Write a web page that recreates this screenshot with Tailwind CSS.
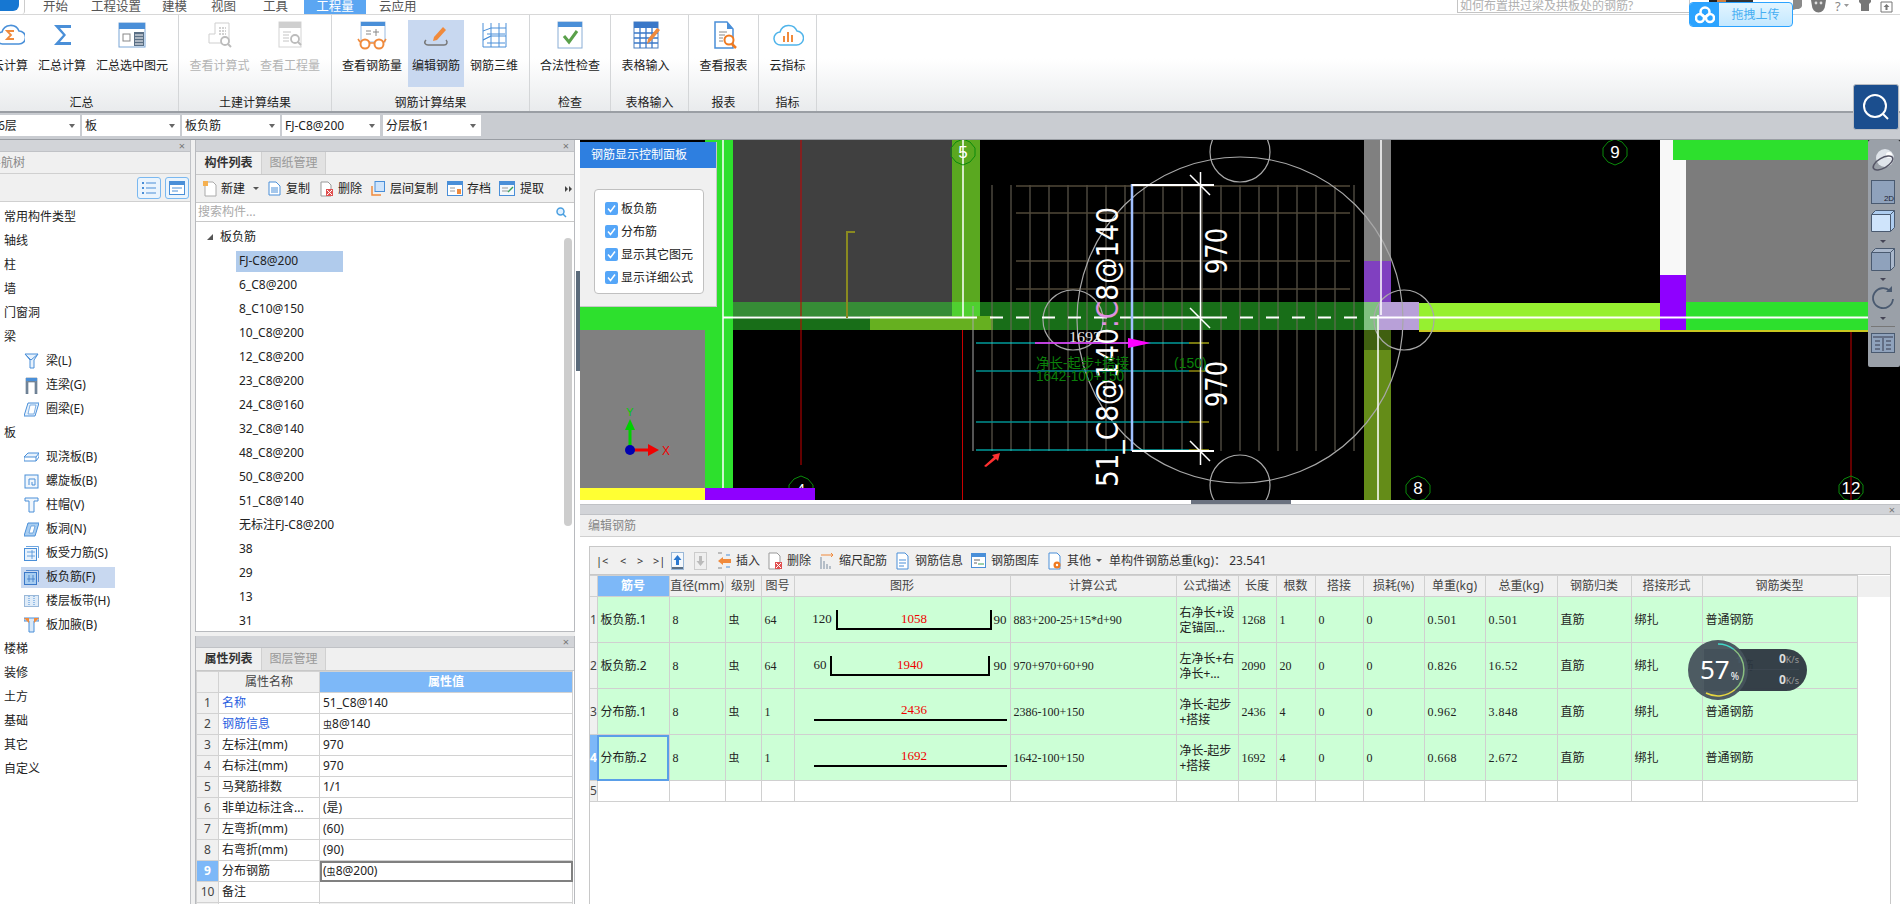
<!DOCTYPE html>
<html lang="zh">
<head>
<meta charset="utf-8">
<title>钢筋</title>
<script src="https://cdn.jsdelivr.net/npm/@tailwindcss/browser@4"></script>
</head>
<body class="m-0 bg-white">
<div class="relative flex h-[904px] w-[1900px] flex-col overflow-hidden bg-white text-[12px] leading-[16px] text-[#222] [font-family:'Noto_Sans','Noto_Sans_CJK_SC',sans-serif]">

  <!-- top tabs -->
  <div class="relative flex h-[15px] shrink-0 items-start border-b border-[#d8d8d8] bg-white">
    <div class="h-[14px] w-[25px] shrink-0 rounded-br-[3px] border-r border-[#ccc] bg-white"><div class="h-[11px] w-[19px] rounded-br-[6px] bg-[#1677d2]"></div></div>
    <div class="flex h-[14px] items-center text-[12.5px] leading-[12px] text-[#555]">
      <span class="w-[58px] pl-[18px]">开始</span>
      <span class="w-[66px] pl-[8px]">工程设置</span>
      <span class="w-[52px] pl-[13px]">建模</span>
      <span class="w-[50px] pl-[10px]">视图</span>
      <span class="w-[53px] pl-[12px]">工具</span>
      <span class="flex h-[14px] w-[62px] items-center justify-center bg-[#5ba6f2] text-white">工程量</span>
      <span class="pl-[13px]">云应用</span>
    </div>
    <div class="absolute left-[1457px] top-0 h-[13px] w-[233px] overflow-hidden border-x border-b border-[#c4c4c4] bg-white pl-[2px] text-[12px] leading-[11px] text-[#b0b0b0]">如何布置拱过梁及拱板处的钢筋?</div>
    <div class="absolute left-[1709px] top-0 flex h-[2px] w-[44px]"><div class="w-[8px] bg-[#222]"></div><div class="w-[9px] bg-[#d08040]"></div><div class="w-[27px] bg-[#333]"></div></div>
    <svg class="absolute left-[1790px] top-0" width="110" height="14" viewBox="0 0 110 14">
      <path d="M3 0h9v6a5 4 0 0 1-6 3l-3 1z" fill="#8a8a8a"/>
      <path d="M21 0h15l-1 6a6 6 0 0 1-13 0z" fill="#777"/><circle cx="26" cy="3" r="1.400" fill="#ddd"/><circle cx="31" cy="3" r="1.400" fill="#ddd"/>
      <text x="45" y="11" font-size="13" fill="#888">?</text><path d="M54 4h5l-2.500 3z" fill="#999"/>
      <path d="M69 0h12v2l-2 2v7h-8V4l-2-2z" fill="#777"/>
      <path d="M91 2h11v10H91z" fill="none" stroke="#777"/><path d="M96.500 4l3 3h-2v3h-2V7h-2z" fill="#777"/>
    </svg>
  </div>

  <!-- upload widget -->
  <div class="absolute left-[1689px] top-[2px] z-30 flex h-[25px] w-[104px] overflow-hidden rounded-[4px] border border-[#2ba3ff] bg-gradient-to-b from-[#e2f5ff] to-[#c4e8ff]">
    <div class="flex w-[29px] items-center justify-center bg-[#2ba3ff]">
      <svg width="20" height="18" viewBox="0 0 20 18"><circle cx="10" cy="6" r="4.500" fill="none" stroke="#fff" stroke-width="2.500"/><circle cx="5" cy="12" r="4" fill="none" stroke="#fff" stroke-width="2.500"/><circle cx="15" cy="12" r="4" fill="none" stroke="#fff" stroke-width="2.500"/></svg>
    </div>
    <div class="flex flex-1 items-center justify-center text-[12px] text-[#46aef2]">拖拽上传</div>
  </div>

  <!-- ribbon -->
  <div class="flex h-[98px] shrink-0 overflow-hidden border-b-2 border-[#9a9ea4] bg-gradient-to-b from-white from-[45%] to-[#e9ebed]">
    <!-- group 1 -->
    <div class="ml-[-15px] flex w-[194px] shrink-0 flex-col border-r border-[#d4d6d8]">
      <div class="flex h-[80px] items-start pt-[5px]">
        <div class="flex w-[50px] flex-col items-center">
          <svg width="30" height="30" viewBox="0 0 30 30"><path d="M8 24a6 6 0 0 1-1-12 9 9 0 0 1 17-1 6.500 6.500 0 0 1 0 13z" fill="#fff" stroke="#4a90d9" stroke-width="1.600"/><path d="M19 11h-7l4 4-4 4h7" fill="none" stroke="#f08a3c" stroke-width="1.800"/></svg>
          <span class="mt-[8px] whitespace-nowrap">云计算</span>
        </div>
        <div class="flex w-[54px] flex-col items-center">
          <svg width="30" height="30" viewBox="0 0 30 30"><path d="M24 5H7l9 10-9 10h17v-3H13l6-7-6-7h11z" fill="#4a8fd8"/></svg>
          <span class="mt-[8px] whitespace-nowrap">汇总计算</span>
        </div>
        <div class="flex w-[86px] flex-col items-center">
          <svg width="30" height="30" viewBox="0 0 30 30"><rect x="2" y="3" width="26" height="24" fill="#fff" stroke="#7ba6d6"/><rect x="2" y="3" width="26" height="6" fill="#4a8fd8"/><rect x="6" y="14" width="7" height="7" fill="none" stroke="#888"/><rect x="17" y="12" width="10" height="14" fill="#5a6f85"/><path d="M18 15h8M18 18h8M18 21h8M18 24h8" stroke="#fff"/></svg>
          <span class="mt-[8px] whitespace-nowrap">汇总选中图元</span>
        </div>
      </div>
      <div class="mt-[1px] text-center">汇总</div>
    </div>
    <!-- group 2 -->
    <div class="flex w-[153px] shrink-0 flex-col border-r border-[#d4d6d8]">
      <div class="flex h-[80px] items-start pl-[5px] pt-[5px] text-[#b4b4b4]">
        <div class="flex w-[71px] flex-col items-center">
          <svg width="30" height="30" viewBox="0 0 30 30"><path d="M10 3h14v20H4V14h6z" fill="#fff" stroke="#cfcfcf"/><path d="M14 8h7M14 11h7M14 14h7" stroke="#c4c4c4" stroke-width="1.500" stroke-dasharray="2 1"/><circle cx="20" cy="21" r="4" fill="#fff" stroke="#bcbcbc" stroke-width="1.800"/><path d="M23 24l3 3" stroke="#bcbcbc" stroke-width="2"/></svg>
          <span class="mt-[8px] whitespace-nowrap">查看计算式</span>
        </div>
        <div class="flex w-[70px] flex-col items-center">
          <svg width="30" height="30" viewBox="0 0 30 30"><rect x="4" y="2" width="22" height="25" fill="#fff" stroke="#d4d4d4"/><rect x="4" y="2" width="22" height="6" fill="#cfcfcf"/><path d="M8 12h8M8 15h6M8 18h6M8 21h6" stroke="#c4c4c4"/><circle cx="20" cy="19" r="4" fill="#fff" stroke="#bcbcbc" stroke-width="1.800"/><path d="M23 22l3 3" stroke="#bcbcbc" stroke-width="2"/></svg>
          <span class="mt-[8px] whitespace-nowrap">查看工程量</span>
        </div>
      </div>
      <div class="mt-[1px] text-center">土建计算结果</div>
    </div>
    <!-- group 3 -->
    <div class="flex w-[198px] shrink-0 flex-col border-r border-[#d4d6d8]">
      <div class="flex h-[80px] items-start pl-[4px]">
        <div class="flex w-[72px] flex-col items-center pt-[5px]">
          <svg width="32" height="30" viewBox="0 0 32 30"><rect x="5" y="2" width="24" height="20" fill="#fff" stroke="#9bbbe0"/><rect x="5" y="2" width="24" height="4" fill="#4a8fd8"/><path d="M10 11h5M10 14h5M20 9v7M17 12h6" stroke="#888"/><circle cx="9" cy="24" r="4.500" fill="#fff" stroke="#f08a3c" stroke-width="2"/><circle cx="23" cy="24" r="4.500" fill="#fff" stroke="#f08a3c" stroke-width="2"/><path d="M13 23h6M4 22l-2-3M28 22l2-3" stroke="#f08a3c" stroke-width="1.600"/></svg>
          <span class="mt-[8px] whitespace-nowrap">查看钢筋量</span>
        </div>
        <div class="mt-[5px] flex h-[67px] w-[56px] flex-col items-center bg-[#c8d8f0]">
          <svg width="30" height="30" viewBox="0 0 30 30"><path d="M5 20c-3 3 0 5 2 5h16c3 0 4-3 2-5" fill="none" stroke="#777" stroke-width="1.500"/><path d="M12 21l1-4 9-10 3 3-9 10z" fill="#f08a3c"/></svg>
          <span class="mt-[8px] whitespace-nowrap">编辑钢筋</span>
        </div>
        <div class="flex w-[60px] flex-col items-center pt-[5px]">
          <svg width="30" height="30" viewBox="0 0 30 30"><path d="M4 3v24M12 3v24M20 3v24M27 3v24M4 11L12 8h15M4 20l8-4h15M12 16l-8 4M4 27h23M8 14h18M8 23h18" fill="none" stroke="#4a8fd8"/></svg>
          <span class="mt-[8px] whitespace-nowrap">钢筋三维</span>
        </div>
      </div>
      <div class="mt-[1px] text-center">钢筋计算结果</div>
    </div>
    <!-- group 4 -->
    <div class="flex w-[81px] shrink-0 flex-col border-r border-[#d4d6d8]">
      <div class="flex h-[80px] flex-col items-center pt-[5px]">
        <svg width="30" height="30" viewBox="0 0 30 30"><rect x="3" y="2" width="24" height="26" fill="#fff" stroke="#8aaed6"/><rect x="3" y="2" width="24" height="5" fill="#4a8fd8"/><path d="M9 16l5 6 8-11" fill="none" stroke="#5aa04a" stroke-width="3"/></svg>
        <span class="mt-[8px] whitespace-nowrap">合法性检查</span>
      </div>
      <div class="mt-[1px] text-center">检查</div>
    </div>
    <!-- group 5 -->
    <div class="flex w-[78px] shrink-0 flex-col border-r border-[#d4d6d8]">
      <div class="flex h-[80px] flex-col items-center pr-[8px] pt-[5px]">
        <svg width="30" height="30" viewBox="0 0 30 30"><rect x="3" y="2" width="24" height="26" fill="#fff" stroke="#4a7fc0"/><rect x="3" y="2" width="24" height="6" fill="#3a78c8"/><path d="M3 13h24M3 18h24M3 23h24M9 8v20M15 8v20M21 8v20" stroke="#3a78c8" stroke-width="1.300"/><path d="M16 24l1-5 9-11 3 2-9 11z" fill="#f08a3c"/></svg>
        <span class="mt-[8px] whitespace-nowrap">表格输入</span>
      </div>
      <div class="mt-[1px] text-center">表格输入</div>
    </div>
    <!-- group 6 -->
    <div class="flex w-[70px] shrink-0 flex-col border-r border-[#d4d6d8]">
      <div class="flex h-[80px] flex-col items-center pt-[5px]">
        <svg width="30" height="30" viewBox="0 0 30 30"><path d="M6 2h12l6 7v19H6z" fill="#fff" stroke="#4a8fd8" stroke-width="1.500"/><path d="M18 2v7h6z" fill="#4a8fd8"/><path d="M10 12h8M10 15h6M10 18h4M10 21h4" stroke="#888"/><circle cx="20" cy="20" r="4.500" fill="#fff" stroke="#f07a20" stroke-width="2"/><path d="M23 24l4 4" stroke="#f07a20" stroke-width="2.500"/></svg>
        <span class="mt-[8px] whitespace-nowrap">查看报表</span>
      </div>
      <div class="mt-[1px] text-center">报表</div>
    </div>
    <!-- group 7 -->
    <div class="flex w-[58px] shrink-0 flex-col border-r border-[#d4d6d8]">
      <div class="flex h-[80px] flex-col items-center pt-[5px]">
        <svg width="32" height="30" viewBox="0 0 32 30"><path d="M9 25a6.500 6.500 0 0 1-1-13 9 9 0 0 1 17-1 7 7 0 0 1-1 14z" fill="#fff" stroke="#4fb4ea" stroke-width="1.500"/><path d="M12 16v6M16 12v10M20 15v7" stroke="#f08a3c" stroke-width="2"/></svg>
        <span class="mt-[8px] whitespace-nowrap">云指标</span>
      </div>
      <div class="mt-[1px] text-center">指标</div>
    </div>
  </div>

  <!-- search button -->
  <div class="absolute left-[1853px] top-[84px] z-30 flex h-[46px] w-[46px] items-center justify-center rounded-[3px] border border-[#b8bcc2] bg-[#1b4e8e]">
    <svg width="34" height="34" viewBox="0 0 34 34"><circle cx="16" cy="16" r="11" fill="none" stroke="#fff" stroke-width="2"/><path d="M24 24l5 5" stroke="#fff" stroke-width="2"/></svg>
  </div>

  <!-- selector row -->
  <div class="flex h-[27px] shrink-0 items-center border-b border-[#9a9ea4] bg-[#c9ccd1] pb-[1px]">
    <div class="ml-[-4px] flex h-[21px] w-[84px] items-center justify-between bg-white pl-[2px] pr-[5px]"><span>6层</span><span class="h-0 w-0 border-x-[3px] border-t-[4px] border-x-transparent border-t-[#666]"></span></div>
    <div class="ml-[2px] flex h-[21px] w-[98px] items-center justify-between bg-white pl-[3px] pr-[5px]"><span>板</span><span class="h-0 w-0 border-x-[3px] border-t-[4px] border-x-transparent border-t-[#666]"></span></div>
    <div class="ml-[2px] flex h-[21px] w-[98px] items-center justify-between bg-white pl-[3px] pr-[5px]"><span>板负筋</span><span class="h-0 w-0 border-x-[3px] border-t-[4px] border-x-transparent border-t-[#666]"></span></div>
    <div class="ml-[2px] flex h-[21px] w-[98px] items-center justify-between bg-white pl-[3px] pr-[5px]"><span>FJ-C8@200</span><span class="h-0 w-0 border-x-[3px] border-t-[4px] border-x-transparent border-t-[#666]"></span></div>
    <div class="ml-[3px] flex h-[21px] w-[98px] items-center justify-between bg-white pl-[3px] pr-[5px]"><span>分层板1</span><span class="h-0 w-0 border-x-[3px] border-t-[4px] border-x-transparent border-t-[#666]"></span></div>
  </div>

  <!-- main -->
  <div class="flex min-h-0 flex-1 bg-[#f0f0f0]">

    <!-- left tree -->
    <div class="flex w-[191px] shrink-0 flex-col border-r border-[#c0c2c6] bg-white">
      <div class="flex h-[12px] shrink-0 items-center justify-end border-b border-[#c0c2c6] bg-[#d2d4d8] pr-[5px] text-[11px] leading-[10px] text-[#777]">×</div>
      <div class="flex h-[22px] shrink-0 items-center overflow-hidden border-b border-[#d0d0d0] bg-[#f0f0f0] text-[#888]"><span class="ml-[-11px]">导航树</span></div>
      <div class="flex h-[28px] shrink-0 items-center justify-end gap-[4px] border-b border-[#d0d0d0] bg-[#f0f0f0] pr-[1px]">
        <div class="flex h-[22px] w-[24px] items-center justify-center rounded-[3px] border border-[#7ab8f0] bg-[#eaf4fd]"><svg width="14" height="14" viewBox="0 0 14 14"><path d="M4 2h10M4 7h10M4 12h10" stroke="#4a8fd8"/><path d="M0 1h2v2H0zM0 6h2v2H0zM0 11h2v2H0z" fill="#4a8fd8"/></svg></div>
        <div class="flex h-[22px] w-[24px] items-center justify-center rounded-[3px] border border-[#7ab8f0] bg-[#eaf4fd]"><svg width="16" height="14" viewBox="0 0 16 14"><rect x=".5" y=".5" width="15" height="13" fill="#fff" stroke="#4a8fd8"/><rect x="1" y="1" width="14" height="3" fill="#4a8fd8"/><path d="M3 7h10M3 10h6" stroke="#4a8fd8"/></svg></div>
      </div>
      <div class="pt-[3px]">
        <div class="flex h-6 items-center pl-[4px]">常用构件类型</div>
        <div class="flex h-6 items-center pl-[4px]">轴线</div>
        <div class="flex h-6 items-center pl-[4px]">柱</div>
        <div class="flex h-6 items-center pl-[4px]">墙</div>
        <div class="flex h-6 items-center pl-[4px]">门窗洞</div>
        <div class="flex h-6 items-center pl-[4px]">梁</div>
        <div class="flex h-6 items-center pl-[24px]"><svg width="15" height="16" viewBox="0 0 15 16"><path d="M1 1h13l-4 6v8H6V7z" fill="#e8f2fc" stroke="#4a8fd8"/><path d="M1 1l6 6 7-6" fill="none" stroke="#4a8fd8"/></svg><span class="ml-[7px]">梁(L)</span></div>
        <div class="flex h-6 items-center pl-[24px]"><svg width="15" height="17" viewBox="0 0 15 17"><path d="M2 1h11v16h-2V5H4v12H2z" fill="#7a8ca0" stroke="#5a6f85" stroke-width=".6"/><rect x="2" y="1" width="11" height="3" fill="#4a8fd8"/></svg><span class="ml-[7px]">连梁(G)</span></div>
        <div class="flex h-6 items-center pl-[24px]"><svg width="15" height="15" viewBox="0 0 15 15"><path d="M4 1h11l-4 13H0z" fill="#e8f2fc" stroke="#4a8fd8"/><path d="M6 3h6l-2 9H4z" fill="#fff" stroke="#4a8fd8" stroke-width=".7"/></svg><span class="ml-[7px]">圈梁(E)</span></div>
        <div class="flex h-6 items-center pl-[4px]">板</div>
        <div class="flex h-6 items-center pl-[24px]"><svg width="15" height="12" viewBox="0 0 15 12"><path d="M4 2h11l-3 4H0z" fill="#e8f2fc" stroke="#4a8fd8"/><path d="M0 6v4h12l3-4V2M12 6v4" fill="none" stroke="#4a8fd8"/></svg><span class="ml-[7px]">现浇板(B)</span></div>
        <div class="flex h-6 items-center pl-[24px]"><svg width="15" height="15" viewBox="0 0 15 15"><rect x="1" y="1" width="13" height="13" fill="#f0f6fc" stroke="#4a8fd8"/><path d="M5 11V5h6v6H8V8" fill="none" stroke="#4a8fd8"/></svg><span class="ml-[7px]">螺旋板(B)</span></div>
        <div class="flex h-6 items-center pl-[24px]"><svg width="15" height="16" viewBox="0 0 15 16"><path d="M1 1h13v3h-4v11H5V4H1z" fill="#f0f6fc" stroke="#4a8fd8"/></svg><span class="ml-[7px]">柱帽(V)</span></div>
        <div class="flex h-6 items-center pl-[24px]"><svg width="15" height="15" viewBox="0 0 15 15"><path d="M4 1h11l-4 13H0z" fill="#a8cdf0" stroke="#4a8fd8"/><path d="M7 4h4l-2 7H5z" fill="#fff" stroke="#4a8fd8" stroke-width=".7"/></svg><span class="ml-[7px]">板洞(N)</span></div>
        <div class="flex h-6 items-center pl-[24px]"><svg width="15" height="15" viewBox="0 0 15 15"><rect x=".5" y="2.500" width="12" height="12" fill="#e8f2fc" stroke="#4a8fd8"/><path d="M2 .5h12.500V12M3 6h8M3 10h8M8 4v9" fill="none" stroke="#4a8fd8" stroke-width=".8"/></svg><span class="ml-[7px]">板受力筋(S)</span></div>
        <div class="flex h-6 items-center"><div class="ml-[21px] flex h-[21px] w-[94px] items-center bg-[#c8d8f0] pl-[3px]"><svg width="15" height="15" viewBox="0 0 15 15"><rect x=".5" y="2.500" width="12" height="12" fill="#a8cdf0" stroke="#3a78c8"/><path d="M2 .5h12.500V12M5 5v7M9 5v7M3 9h8" fill="none" stroke="#3a78c8" stroke-width=".8"/></svg><span class="ml-[7px]">板负筋(F)</span></div></div>
        <div class="flex h-6 items-center pl-[24px]"><svg width="15" height="12" viewBox="0 0 15 12"><rect x=".5" y=".5" width="14" height="11" fill="#e0ecf8" stroke="#9ab8d8"/><path d="M5 1v10M10 1v10" stroke="#4a8fd8" stroke-dasharray="1 1"/></svg><span class="ml-[7px]">楼层板带(H)</span></div>
        <div class="flex h-6 items-center pl-[24px]"><svg width="15" height="16" viewBox="0 0 15 16"><path d="M0 1h15v3h-5v11H5V4H0z" fill="#d8e8f8" stroke="#4a8fd8"/><path d="M0 1l5 5V1zM15 1l-5 5V1z" fill="#f08a3c"/></svg><span class="ml-[7px]">板加腋(B)</span></div>
        <div class="flex h-6 items-center pl-[4px]">楼梯</div>
        <div class="flex h-6 items-center pl-[4px]">装修</div>
        <div class="flex h-6 items-center pl-[4px]">土方</div>
        <div class="flex h-6 items-center pl-[4px]">基础</div>
        <div class="flex h-6 items-center pl-[4px]">其它</div>
        <div class="flex h-6 items-center pl-[4px]">自定义</div>
      </div>
    </div>

    <!-- middle column -->
    <div class="ml-[4px] flex w-[380px] shrink-0 flex-col">
      <!-- component list -->
      <div class="flex h-[492px] shrink-0 flex-col border-x border-b border-[#b8babe] bg-white">
        <div class="flex h-[12px] shrink-0 items-center justify-end border-b border-[#c0c2c6] bg-[#d2d4d8] pr-[5px] text-[11px] leading-[10px] text-[#777]">×</div>
        <div class="flex h-[23px] shrink-0 border-b border-[#c8c8c8] bg-[#f0f0f0]">
          <div class="flex w-[65px] items-center justify-center font-bold text-[#333]">构件列表</div>
          <div class="flex w-[65px] items-center justify-center border-x border-[#d0d0d0] bg-[#e2e2e2] text-[#999]">图纸管理</div>
        </div>
        <div class="relative flex h-[28px] shrink-0 items-center border-b border-[#c8c8c8] bg-[#f0f0f0] pl-[7px]">
          <svg class="shrink-0" width="14" height="16" viewBox="0 0 14 16"><path d="M2 1h8l3 3v11H2z" fill="#fff" stroke="#aaa"/><path d="M0 0h5v5H0z" fill="#f5b050"/></svg>
          <span class="ml-[4px]">新建</span><span class="ml-[8px] h-0 w-0 border-x-[3px] border-t-[3px] border-x-transparent border-t-[#555]"></span>
          <svg class="ml-[9px] shrink-0" width="13" height="15" viewBox="0 0 13 15"><path d="M1 1h7l4 4v9H1z" fill="#fff" stroke="#4a8fd8"/><path d="M3 7h7M3 9h7M3 11h7" stroke="#4a8fd8"/></svg>
          <span class="ml-[5px]">复制</span>
          <svg class="ml-[10px] shrink-0" width="13" height="16" viewBox="0 0 13 16"><path d="M1 1h7l3 3v11H1z" fill="#fff" stroke="#999"/><rect x="6" y="8" width="7" height="7" fill="#e05050"/><path d="M7 9l5 5M12 9l-5 5" stroke="#fff"/></svg>
          <span class="ml-[5px]">删除</span>
          <svg class="ml-[9px] shrink-0" width="14" height="15" viewBox="0 0 14 15"><rect x="4" y="0.500" width="9.500" height="10" fill="#cfe4fb" stroke="#4a8fd8"/><path d="M1 5v9h9" fill="none" stroke="#f08a3c" stroke-width="1.500"/></svg>
          <span class="ml-[5px]">层间复制</span>
          <svg class="ml-[9px] shrink-0" width="16" height="15" viewBox="0 0 16 15"><rect x=".5" y=".5" width="15" height="14" fill="#fff" stroke="#4a8fd8"/><rect x="1" y="1" width="14" height="3" fill="#4a8fd8"/><path d="M3 7h5M3 10h5" stroke="#999"/><rect x="10" y="8" width="4" height="5" fill="#f08a3c"/></svg>
          <span class="ml-[4px]">存档</span>
          <svg class="ml-[8px] shrink-0" width="16" height="15" viewBox="0 0 16 15"><rect x=".5" y=".5" width="15" height="14" fill="#f4f8fc" stroke="#4a8fd8"/><rect x="1" y="1" width="14" height="3" fill="#4a8fd8"/><path d="M3 7h6M3 10h6" stroke="#999"/><path d="M9 11l5-5" stroke="#3aa05a" stroke-width="1.500"/></svg>
          <span class="ml-[5px]">提取</span>
          <span class="absolute left-[369px] top-[11px] flex gap-px"><span class="h-0 w-0 border-y-[3px] border-l-[3px] border-y-transparent border-l-[#444]"></span><span class="h-0 w-0 border-y-[3px] border-l-[3px] border-y-transparent border-l-[#444]"></span></span>
        </div>
        <div class="flex h-[19px] shrink-0 items-center justify-between border-b border-[#c8c8c8] bg-white pl-[2px] pr-[7px] text-[#aaa]">
          <span>搜索构件...</span>
          <svg width="11" height="11" viewBox="0 0 11 11"><circle cx="4.500" cy="4.500" r="3.500" fill="#e0f0ff" stroke="#4a9fe0" stroke-width="1.500"/><path d="M7 7l3 3" stroke="#4a9fe0" stroke-width="1.500"/></svg>
        </div>
        <div class="relative min-h-0 flex-1 overflow-hidden pt-[3px]">
          <div class="absolute left-[368px] top-[16px] h-[288px] w-[8px] rounded-[4px] bg-[#cdcdcd]"></div>
          <div class="flex h-6 items-center pl-[10px]"><svg width="8" height="8" viewBox="0 0 8 8"><path d="M7 1v6H1z" fill="#555"/></svg><span class="ml-[6px]">板负筋</span></div>
          <div class="flex h-6 items-center pl-[40px]"><span class="flex h-[21px] w-[107px] items-center bg-[#b0cbec] pl-[3px]">FJ-C8@200</span></div>
          <div class="flex h-6 items-center pl-[43px]">6_C8@200</div>
          <div class="flex h-6 items-center pl-[43px]">8_C10@150</div>
          <div class="flex h-6 items-center pl-[43px]">10_C8@200</div>
          <div class="flex h-6 items-center pl-[43px]">12_C8@200</div>
          <div class="flex h-6 items-center pl-[43px]">23_C8@200</div>
          <div class="flex h-6 items-center pl-[43px]">24_C8@160</div>
          <div class="flex h-6 items-center pl-[43px]">32_C8@140</div>
          <div class="flex h-6 items-center pl-[43px]">48_C8@200</div>
          <div class="flex h-6 items-center pl-[43px]">50_C8@200</div>
          <div class="flex h-6 items-center pl-[43px]">51_C8@140</div>
          <div class="flex h-6 items-center pl-[43px]">无标注FJ-C8@200</div>
          <div class="flex h-6 items-center pl-[43px]">38</div>
          <div class="flex h-6 items-center pl-[43px]">29</div>
          <div class="flex h-6 items-center pl-[43px]">13</div>
          <div class="flex h-6 items-center pl-[43px]">31</div>
        </div>
      </div>
      <!-- properties -->
      <div class="mt-[4px] flex min-h-0 flex-1 flex-col overflow-hidden border-x border-[#b8babe] bg-white">
        <div class="flex h-[12px] shrink-0 items-center justify-end border-b border-[#c0c2c6] bg-[#d2d4d8] pr-[5px] text-[11px] leading-[10px] text-[#777]">×</div>
        <div class="flex h-[23px] shrink-0 border-b border-[#c8c8c8] bg-[#f0f0f0]">
          <div class="flex w-[65px] items-center justify-center font-bold text-[#333]">属性列表</div>
          <div class="flex w-[65px] items-center justify-center border-x border-[#d0d0d0] bg-[#e2e2e2] text-[#999]">图层管理</div>
        </div>
        <table class="w-[376px] table-fixed border-collapse [&_td]:h-[21px] [&_td]:border [&_td]:border-[#d2d2d2] [&_td]:px-[3px] [&_td]:py-0 [&_th]:h-[21px] [&_th]:border [&_th]:border-[#d2d2d2] [&_th]:p-0">
          <colgroup><col class="w-[22px]"><col class="w-[101px]"><col class="w-[253px]"></colgroup>
          <tr><th class="bg-[#f0f0f0]"></th><th class="bg-[#f0f0f0] font-normal text-[#444]">属性名称</th><th class="bg-[#7db8f8] font-bold text-white">属性值</th></tr>
          <tr><td class="bg-[#f0f0f0] text-center text-[#444]">1</td><td class="text-[#2a5fe0]">名称</td><td>51_C8@140</td></tr>
          <tr><td class="bg-[#f0f0f0] text-center text-[#444]">2</td><td class="text-[#2a5fe0]">钢筋信息</td><td><span class="text-[9px]">虫</span>8@140</td></tr>
          <tr><td class="bg-[#f0f0f0] text-center text-[#444]">3</td><td>左标注(mm)</td><td>970</td></tr>
          <tr><td class="bg-[#f0f0f0] text-center text-[#444]">4</td><td>右标注(mm)</td><td>970</td></tr>
          <tr><td class="bg-[#f0f0f0] text-center text-[#444]">5</td><td>马凳筋排数</td><td>1/1</td></tr>
          <tr><td class="bg-[#f0f0f0] text-center text-[#444]">6</td><td>非单边标注含...</td><td>(是)</td></tr>
          <tr><td class="bg-[#f0f0f0] text-center text-[#444]">7</td><td>左弯折(mm)</td><td>(60)</td></tr>
          <tr><td class="bg-[#f0f0f0] text-center text-[#444]">8</td><td>右弯折(mm)</td><td>(90)</td></tr>
          <tr><td class="bg-[#7db8f8] text-center font-bold text-white">9</td><td>分布钢筋</td><td class="outline outline-2 -outline-offset-2 outline-[#808080]">(<span class="text-[9px]">虫</span>8@200)</td></tr>
          <tr><td class="bg-[#f0f0f0] text-center text-[#444]">10</td><td>备注</td><td></td></tr>
          <tr><td class="bg-[#f0f0f0]"></td><td></td><td class="bg-[#f0f0f0]"></td></tr>
        </table>
      </div>
    </div>

    <!-- splitter -->
    <div class="w-[5px] shrink-0 bg-white pt-[131px]"><div class="ml-[1px] h-[100px] w-[4px] bg-[#5b6b7b]"></div></div>

    <!-- right column -->
    <div class="flex min-w-0 flex-1 flex-col bg-white">
      <!-- canvas -->
      <div class="relative h-[360px] shrink-0 overflow-hidden bg-black">
        <svg class="absolute inset-0" width="1320" height="360" viewBox="580 140 1320 360">
          <rect x="733" y="140" width="219" height="162" fill="#404040"/>
          <rect x="705" y="140" width="28" height="348" fill="#2de02d"/>
          <rect x="580" y="302" width="125" height="28" fill="#2de02d"/>
          <rect x="580" y="330" width="125" height="158" fill="#808080"/>
          <rect x="580" y="488" width="125" height="12" fill="#ffff33"/>
          <rect x="952" y="140" width="28" height="162" fill="#5aa820"/>
          <!-- right structure -->
          <rect x="1364" y="140" width="27" height="121" fill="#808080"/>
          <rect x="1364" y="261" width="27" height="42" fill="#8040c0"/>
          <rect x="1364" y="330" width="27" height="20" fill="#406010"/>
          <rect x="1364" y="350" width="27" height="150" fill="#648c18"/>
          <rect x="1660" y="140" width="26" height="135" fill="#f8f8f8"/>
          <rect x="1673" y="140" width="195" height="20" fill="#2de02d"/>
          <rect x="1686" y="160" width="182" height="142" fill="#7c7c7c"/>
          <rect x="1660" y="275" width="26" height="55" fill="#8f00ff"/>
          <rect x="1686" y="302" width="182" height="28" fill="#2de02d"/>
          <rect x="1419" y="303" width="241" height="27" fill="#96f030"/>
          <rect x="1419" y="330" width="449" height="2" fill="#c8c820"/>
          <!-- horizontal band -->
          <rect x="733" y="302" width="631" height="28" fill="#186e18"/>
          <rect x="733" y="302" width="219" height="14" fill="#368c36"/>
          <rect x="952" y="302" width="28" height="14" fill="#50d030"/>
          <rect x="870" y="316" width="123" height="14" fill="#66b020"/>
          <rect x="1364" y="302" width="15" height="28" fill="#80c080"/>
          <rect x="1379" y="302" width="40" height="28" fill="#b8a0d8"/>
          <!-- grid -->
          <g stroke="#706a5c" stroke-width="1">
            <path d="M992 185V451M1011 185V451M1030 185V451M1049 185V451M1068 185V451M1087 185V451M1106 185V451M1125 185V451M1144 185V451M1163 185V451M1182 185V451M1202 185V451M1221 185V451M1240 185V451M1259 185V451M1278 185V451M1297 185V451M1316 185V451M1335 185V451M1354 185V451"/>
            <path d="M973 306V451" stroke="#a8a8a8"/>
          </g>
          <g stroke="#504838" stroke-width="1.500">
            <path d="M1016 186H1350M1016 213H1350M1016 261H1350M1016 289H1350"/>
          </g>
          <!-- circles -->
          <g fill="none" stroke="#a8a8a8" stroke-width="1.200">
            <circle cx="1240" cy="320" r="163"/>
            <circle cx="1073" cy="320" r="30"/>
            <circle cx="1404" cy="320" r="30"/>
            <circle cx="1240" cy="152" r="30"/>
            <circle cx="1240" cy="485" r="30"/>
          </g>
          <!-- cyan rebars -->
          <path d="M976 343H1189M976 450H1189" stroke="#00e8e8" stroke-width="1.200"/>
          <path d="M976 371H1189M976 422H1189" stroke="#009090" stroke-width="1.500"/>
          <path d="M1189 343H1209M1189 450H1209" stroke="#f0f020" stroke-width="1.200"/>
          <path d="M1189 371H1209M1189 422H1209" stroke="#908810" stroke-width="1.500"/>
          <!-- red lines -->
          <path d="M801 140V465M962.500 330V500M1851 332V500" stroke="#c80000" stroke-width="1"/>
          <!-- white lines -->
          <path d="M723 140V500M963 140V317M1381 140V315M1378 315V500" stroke="#fff" stroke-width="1.500"/>
          <path d="M723 317.500H964M1378 317.500H1868M1132 317.500H1214" stroke="#fff" stroke-width="2"/>
          <path d="M964 317.500H1132M1214 317.500H1378" stroke="#fff" stroke-width="2" stroke-dasharray="13 13"/>
          <!-- dimension -->
          <path d="M1132 184V451" stroke="#a0c0ff" stroke-width="2.500"/>
          <path d="M1132 185H1214M1132 451H1214" stroke="#fff" stroke-width="2"/>
          <path d="M1200.500 172V465M1190 175L1210 195M1190 308L1210 328M1190 441L1210 461" stroke="#fff" stroke-width="1.500"/>
          <!-- magenta arrow -->
          <path d="M1035 343H1135" stroke="#ff30ff" stroke-width="1.500"/>
          <path d="M1128 338L1151 343L1128 348z" fill="#ff00ff"/>
          <!-- L mark -->
          <path d="M855 232H847V318" fill="none" stroke="#8a8a20" stroke-width="2"/>
          <!-- red arrow -->
          <path d="M1000 453L992 455L994 457L984 466L986 467L996 459L998 461z" fill="#ff3030"/>
          <!-- texts -->
          <text transform="translate(1118,487) rotate(-90)" font-size="30" fill="#fff" textLength="280" lengthAdjust="spacingAndGlyphs" style="font-family:'DejaVu Sans',sans-serif">51_C8@140<tspan fill="#e090e0">:C</tspan>8@140</text>
          <text transform="translate(1227,274) rotate(-90)" font-size="31" fill="#fff" textLength="46" lengthAdjust="spacingAndGlyphs" style="font-family:'DejaVu Sans',sans-serif">970</text>
          <text transform="translate(1227,407) rotate(-90)" font-size="31" fill="#fff" textLength="46" lengthAdjust="spacingAndGlyphs" style="font-family:'DejaVu Sans',sans-serif">970</text>
          <text x="1069" y="342" font-size="15" fill="#e8e8e8" textLength="32" lengthAdjust="spacingAndGlyphs" style="font-family:'Liberation Serif',serif">1692</text>
          <text x="1036" y="368" font-size="13.500" fill="#0a800a">净长-起步+搭接</text>
          <text x="1036" y="381" font-size="14" fill="#0a800a" style="font-family:'Liberation Sans',sans-serif" textLength="88" lengthAdjust="spacingAndGlyphs">1642-100+150</text>
          <text x="1174" y="368" font-size="14" fill="#0a800a" style="font-family:'Liberation Sans',sans-serif">(150)</text>
          <!-- axis nodes -->
          <g fill="none" stroke="#0a8a0a" stroke-width="1">
            <polygon points="963,139 970,142 975,148 975,156 970,162 963,165 956,162 951,156 951,148 956,142"/>
            <polygon points="801,476 808,479 813,485 813,493 808,499 801,502 794,499 789,493 789,485 794,479"/>
            <polygon points="1615,139 1622,142 1627,148 1627,156 1622,162 1615,165 1608,162 1603,156 1603,148 1608,142"/>
            <polygon points="1418,476 1425,479 1430,485 1430,493 1425,499 1418,501 1411,499 1406,493 1406,485 1411,479"/>
            <polygon points="1851,476 1858,479 1863,485 1863,493 1858,499 1851,501 1844,499 1839,493 1839,485 1844,479"/>
          </g>
          <g fill="#fff" font-size="17" text-anchor="middle" style="font-family:'Liberation Sans',sans-serif">
            <text x="963" y="158">5</text><text x="801" y="494" font-size="15">4</text><text x="1615" y="158">9</text><text x="1418" y="494">8</text><text x="1851" y="494">12</text>
          </g>
          <rect x="705" y="488" width="110" height="12" fill="#8f00ff"/>
          <!-- xyz -->
          <path d="M630 450V428" stroke="#00d000" stroke-width="3"/>
          <path d="M625 430L630 419L635 430z" fill="#00d000"/>
          <text x="630" y="416" font-size="11" fill="#00d000" text-anchor="middle" style="font-family:'Liberation Sans',sans-serif">Y</text>
          <path d="M630 450H650" stroke="#f00000" stroke-width="3"/>
          <path d="M648 444L659 450L648 456z" fill="#f00000"/>
          <text x="666" y="455" font-size="12" fill="#f00000" text-anchor="middle" style="font-family:'Liberation Sans',sans-serif">X</text>
          <circle cx="630" cy="450" r="5" fill="#0000b0"/>
          <!-- right tool strip -->
          <rect x="1868" y="140" width="32" height="227" rx="2" fill="#9aa0a8"/>
          <circle cx="1885" cy="158" r="9" fill="#dfe4ea"/><circle cx="1889" cy="155" r="3" fill="#fff"/><ellipse cx="1883" cy="163" rx="11" ry="5" fill="none" stroke="#556" stroke-width="1.500" transform="rotate(-30 1883 163)"/>
          <rect x="1871.500" y="180.500" width="23" height="23" fill="#8fa2bc" stroke="#4a5a70"/><text x="1889" y="201" font-size="8" fill="#223" text-anchor="middle" style="font-family:'Liberation Sans',sans-serif">2D</text>
          <path d="M1871.500 214.500l4-4h19v17l-4 4M1890.500 214.500l4-4" fill="#aecdf0" stroke="#4a5a70"/><path d="M1871.500 214.500h19v17h-19z" fill="#cfe4fb" stroke="#4a5a70"/>
          <path d="M1880 240h6l-3 3z" fill="#445"/>
          <path d="M1871.500 252.500l4-4h19v18l-4 4M1890.500 252.500l4-4" fill="#aab8cc" stroke="#4a5a70"/><path d="M1871.500 252.500h19v18h-19z" fill="#8fa2bc" stroke="#4a5a70"/>
          <path d="M1880 278h6l-3 3z" fill="#445"/>
          <path d="M1893 299a10 10 0 1 1-3-8" fill="none" stroke="#4a5a70" stroke-width="1.800"/><path d="M1892 286v6h-6z" fill="#4a5a70"/>
          <path d="M1880 317h6l-3 3z" fill="#445"/>
          <path d="M1871 326.500h24" stroke="#777"/>
          <rect x="1871.500" y="333.500" width="23" height="19" fill="#8fa2bc" stroke="#4a5a70"/><path d="M1873 337h20M1883 338v13M1875 341h5M1875 345h5M1875 349h5M1886 341h5M1886 345h5M1886 349h5" stroke="#223" stroke-width=".8"/>
        </svg>
        <!-- control panel -->
        <div class="absolute left-0 top-[2px] h-[165px] w-[137px] border-r border-b border-[#c8c8c8] bg-[#f0f0f0]">
          <div class="flex h-[26px] items-center bg-[#2e7fe0] pl-[11px] text-white">钢筋显示控制面板</div>
          <div class="ml-[14px] mt-[21px] h-[105px] w-[110px] rounded-[4px] border border-[#c0c0c0] bg-white pl-[10px] pt-[7px]">
            <div class="flex h-[23px] items-center gap-[3px]"><span class="flex h-[13px] w-[13px] items-center justify-center rounded-[2px] bg-[#55a6f8]"><svg width="9" height="9" viewBox="0 0 9 9"><path d="M1 4.500l2.500 3L8 1.500" fill="none" stroke="#fff" stroke-width="1.500"/></svg></span>板负筋</div>
            <div class="flex h-[23px] items-center gap-[3px]"><span class="flex h-[13px] w-[13px] items-center justify-center rounded-[2px] bg-[#55a6f8]"><svg width="9" height="9" viewBox="0 0 9 9"><path d="M1 4.500l2.500 3L8 1.500" fill="none" stroke="#fff" stroke-width="1.500"/></svg></span>分布筋</div>
            <div class="flex h-[23px] items-center gap-[3px]"><span class="flex h-[13px] w-[13px] items-center justify-center rounded-[2px] bg-[#55a6f8]"><svg width="9" height="9" viewBox="0 0 9 9"><path d="M1 4.500l2.500 3L8 1.500" fill="none" stroke="#fff" stroke-width="1.500"/></svg></span>显示其它图元</div>
            <div class="flex h-[23px] items-center gap-[3px]"><span class="flex h-[13px] w-[13px] items-center justify-center rounded-[2px] bg-[#55a6f8]"><svg width="9" height="9" viewBox="0 0 9 9"><path d="M1 4.500l2.500 3L8 1.500" fill="none" stroke="#fff" stroke-width="1.500"/></svg></span>显示详细公式</div>
          </div>
        </div>
      </div>
      <!-- strip -->
      <div class="h-[4px] shrink-0 bg-white pl-[611px]"><div class="h-[4px] w-[100px] bg-[#6b7280]"></div></div>
      <!-- edit panel -->
      <div class="flex h-[11px] shrink-0 items-center justify-end border-y border-[#c0c2c6] bg-[#d2d4d8] pr-[5px] text-[11px] leading-[9px] text-[#777]">×</div>
      <div class="flex h-[22px] shrink-0 items-center border-b border-[#d0d0d0] bg-[#f0f0f0] pl-[8px] text-[#888]">编辑钢筋</div>
      <div class="flex min-h-0 flex-1 pl-[9px] pr-[10px] pt-[9px]">
        <div class="flex min-h-0 flex-1 flex-col border-x border-t border-[#c8c8c8] bg-white">
          <!-- toolbar -->
          <div class="flex h-[28px] shrink-0 items-center border-b border-[#c8c8c8] bg-[#f0f0f0] pl-[6px] text-[#333]">
            <span class="w-[24px] text-[11px]">|&lt;</span><span class="w-[17px] text-[11px]">&lt;</span><span class="w-[16px] text-[11px]">&gt;</span><span class="w-[18px] text-[11px]">&gt;|</span>
            <svg class="shrink-0" width="13" height="18" viewBox="0 0 13 18"><rect x=".5" y=".5" width="12" height="17" fill="#f4f8fc" stroke="#9ab8d8"/><path d="M6.500 3l4 5H8v5H5V8H2.500z" fill="#2a78d0"/><rect x="1" y="15" width="11" height="2" fill="#5a6f85"/></svg>
            <svg class="ml-[10px] shrink-0" width="13" height="18" viewBox="0 0 13 18"><rect x=".5" y=".5" width="12" height="17" fill="#efefef" stroke="#ccc"/><path d="M6.500 14l4-5H8V4H5v5H2.500z" fill="#bbb"/></svg>
            <svg class="ml-[10px] shrink-0" width="14" height="18" viewBox="0 0 14 18"><path d="M1 1h4M1 16h4" stroke="#888"/><path d="M14 7H6V5L1 9l5 4v-2h8z" fill="#f08a3c"/><path d="M9 3h4M9 15h4" stroke="#4a8fd8"/></svg>
            <span class="ml-[5px]">插入</span>
            <svg class="ml-[8px] shrink-0" width="14" height="18" viewBox="0 0 14 18"><path d="M1 1h8l3 3v13H1z" fill="#fff" stroke="#999"/><rect x="7" y="10" width="7" height="7" fill="#e05050"/><path d="M8 11l5 5M13 11l-5 5" stroke="#fff"/></svg>
            <span class="ml-[5px]">删除</span>
            <svg class="ml-[9px] shrink-0" width="14" height="18" viewBox="0 0 14 18"><path d="M1 3h12M11 1l2 2-2 2" stroke="#f08a3c" fill="none"/><path d="M1 5v12M4 9v8M7 12v5M10 14v3" stroke="#7a8ca0"/></svg>
            <span class="ml-[5px]">缩尺配筋</span>
            <svg class="ml-[9px] shrink-0" width="13" height="18" viewBox="0 0 13 18"><path d="M1 1h8l3 3v13H1z" fill="#fff" stroke="#4a8fd8"/><path d="M3 8h7M3 11h7M3 14h5" stroke="#4a8fd8"/></svg>
            <span class="ml-[6px]">钢筋信息</span>
            <svg class="ml-[8px] shrink-0" width="15" height="15" viewBox="0 0 15 15"><rect x=".5" y=".5" width="14" height="14" fill="#fff" stroke="#4a8fd8"/><rect x="1" y="1" width="13" height="3" fill="#4a8fd8"/><path d="M3 7h6M3 10h3" stroke="#666"/><path d="M7 11h6" stroke="#3aa05a"/></svg>
            <span class="ml-[5px]">钢筋图库</span>
            <svg class="ml-[9px] shrink-0" width="14" height="18" viewBox="0 0 14 18"><path d="M1 1h8l3 3v13H1z" fill="#fff" stroke="#4a8fd8"/><circle cx="9" cy="13" r="3.500" fill="#f07a20"/><circle cx="9" cy="13" r="1.200" fill="#fff"/></svg>
            <span class="ml-[5px]">其他</span><span class="ml-[5px] h-0 w-0 border-x-[3px] border-t-[3px] border-x-transparent border-t-[#555]"></span>
            <span class="ml-[7px] whitespace-nowrap">单构件钢筋总重(kg)： 23.541</span>
          </div>
          <!-- table -->
          <table class="w-[1300px] table-fixed border-collapse [&_td]:border [&_td]:border-[#d0d0d0] [&_td]:px-[3px] [&_td]:py-0 [&_th]:h-[21px] [&_th]:border [&_th]:border-[#d0d0d0] [&_th]:bg-[#f0f0f0] [&_th]:p-0 [&_th]:font-normal [&_th]:text-[#444]">
            <colgroup><col class="w-[7px]"><col class="w-[72px]"><col class="w-[56px]"><col class="w-[36px]"><col class="w-[33px]"><col class="w-[216px]"><col class="w-[166px]"><col class="w-[62px]"><col class="w-[38px]"><col class="w-[39px]"><col class="w-[48px]"><col class="w-[61px]"><col class="w-[61px]"><col class="w-[72px]"><col class="w-[74px]"><col class="w-[71px]"><col class="w-[155px]"><col class="w-[33px]"></colgroup>
            <tr><th class="border-l-0!"></th><th class="bg-[#7db8f8]! font-bold! text-white!">筋号</th><th class="whitespace-nowrap">直径(mm)</th><th>级别</th><th>图号</th><th>图形</th><th>计算公式</th><th>公式描述</th><th>长度</th><th>根数</th><th>搭接</th><th>损耗(%)</th><th>单重(kg)</th><th>总重(kg)</th><th>钢筋归类</th><th>搭接形式</th><th>钢筋类型</th><th class="border-0!"></th></tr>

            <tr class="h-[46px] bg-[#ccffd6] [&_.n]:[font-family:'Liberation_Serif',serif]">
              <td class="overflow-visible border-l-0! bg-[#f0f0f0] px-0! text-center text-[#444]">1</td><td class="whitespace-nowrap">板负筋.1</td><td class="n">8</td><td class="text-[11px]">虫</td><td class="n">64</td>
              <td class="p-0!"><svg class="block" width="216" height="45" viewBox="0 0 216 45"><g font-size="13" text-anchor="middle" style="font-family:'Liberation Serif',serif"><text x="27" y="26" fill="#222">120</text><text x="119" y="26" fill="#f00000">1058</text><text x="205" y="27" fill="#222">90</text></g><path d="M42 13V32H196V13" fill="none" stroke="#000" stroke-width="2"/></svg></td>
              <td class="n whitespace-nowrap">883+200-25+15*d+90</td><td class="leading-[15px]">右净长+设<br>定锚固…</td><td class="n">1268</td><td class="n">1</td><td class="n">0</td><td class="n">0</td><td class="n tracking-[.5px]">0.501</td><td class="n tracking-[.5px]">0.501</td><td>直筋</td><td>绑扎</td><td>普通钢筋</td><td class="border-0! bg-white"></td>
            </tr>
            <tr class="h-[46px] bg-[#ccffd6] [&_.n]:[font-family:'Liberation_Serif',serif]">
              <td class="border-l-0! bg-[#f0f0f0] px-0! text-center text-[#444]">2</td><td class="whitespace-nowrap">板负筋.2</td><td class="n">8</td><td class="text-[11px]">虫</td><td class="n">64</td>
              <td class="p-0!"><svg class="block" width="216" height="45" viewBox="0 0 216 45"><g font-size="13" text-anchor="middle" style="font-family:'Liberation Serif',serif"><text x="25" y="26" fill="#222">60</text><text x="115" y="26" fill="#f00000">1940</text><text x="205" y="27" fill="#222">90</text></g><path d="M36 13V32H194V13" fill="none" stroke="#000" stroke-width="2"/></svg></td>
              <td class="n whitespace-nowrap">970+970+60+90</td><td class="leading-[15px]">左净长+右<br>净长+…</td><td class="n">2090</td><td class="n">20</td><td class="n">0</td><td class="n">0</td><td class="n tracking-[.5px]">0.826</td><td class="n tracking-[.5px]">16.52</td><td>直筋</td><td>绑扎</td><td>普通钢筋</td><td class="border-0! bg-white"></td>
            </tr>
            <tr class="h-[46px] bg-[#ccffd6] [&_.n]:[font-family:'Liberation_Serif',serif]">
              <td class="border-l-0! bg-[#f0f0f0] px-0! text-center text-[#444]">3</td><td class="whitespace-nowrap">分布筋.1</td><td class="n">8</td><td class="text-[11px]">虫</td><td class="n">1</td>
              <td class="p-0!"><svg class="block" width="216" height="45" viewBox="0 0 216 45"><text x="119" y="25" font-size="13" text-anchor="middle" fill="#f00000" style="font-family:'Liberation Serif',serif">2436</text><path d="M19 31H212" stroke="#000" stroke-width="2"/></svg></td>
              <td class="n whitespace-nowrap">2386-100+150</td><td class="leading-[15px]">净长-起步<br>+搭接</td><td class="n">2436</td><td class="n">4</td><td class="n">0</td><td class="n">0</td><td class="n tracking-[.5px]">0.962</td><td class="n tracking-[.5px]">3.848</td><td>直筋</td><td>绑扎</td><td>普通钢筋</td><td class="border-0! bg-white"></td>
            </tr>
            <tr class="h-[46px] bg-[#ccffd6] [&_.n]:[font-family:'Liberation_Serif',serif]">
              <td class="border-l-0! bg-[#7db8f8] px-0! text-center font-bold text-white">4</td><td class="whitespace-nowrap outline-2 -outline-offset-2 outline-[#5a9ee8]">分布筋.2</td><td class="n">8</td><td class="text-[11px]">虫</td><td class="n">1</td>
              <td class="p-0!"><svg class="block" width="216" height="45" viewBox="0 0 216 45"><text x="119" y="25" font-size="13" text-anchor="middle" fill="#f00000" style="font-family:'Liberation Serif',serif">1692</text><path d="M19 31H212" stroke="#000" stroke-width="2"/></svg></td>
              <td class="n whitespace-nowrap">1642-100+150</td><td class="leading-[15px]">净长-起步<br>+搭接</td><td class="n">1692</td><td class="n">4</td><td class="n">0</td><td class="n">0</td><td class="n tracking-[.5px]">0.668</td><td class="n tracking-[.5px]">2.672</td><td>直筋</td><td>绑扎</td><td>普通钢筋</td><td class="border-0! bg-white"></td>
            </tr>
            <tr class="h-[21px]">
              <td class="border-l-0! bg-[#f0f0f0] px-0! text-center text-[#444]">5</td><td></td><td></td><td></td><td></td><td></td><td></td><td></td><td></td><td></td><td></td><td></td><td></td><td></td><td></td><td></td><td></td><td class="border-0!"></td>
            </tr>
          </table>
        </div>
      </div>
    </div>
  </div>

  <!-- network widget -->
  <div class="absolute left-[1688px] top-[640px] z-40 h-[60px] w-[120px]">
    <div class="absolute left-[16px] top-[9px] flex h-[42px] w-[103px] flex-col rounded-r-[21px] bg-[#2c3640]/95 pl-[32px] pr-[8px] text-[#ddd]">
      <div class="flex h-[21px] items-center justify-between border-b border-[#3c4650]"><svg width="7" height="8" viewBox="0 0 7 8"><path d="M3.500 0L7 4H4.500v4h-2V4H0z" fill="#4ab4f0"/></svg><span class="text-[12px] font-bold leading-[12px]">0<span class="text-[9px] font-normal text-[#999]">K/s</span></span></div>
      <div class="flex h-[21px] items-center justify-between"><svg width="7" height="8" viewBox="0 0 7 8"><path d="M3.500 8L7 4H4.500V0h-2v4H0z" fill="#30c040"/></svg><span class="text-[12px] font-bold leading-[12px]">0<span class="text-[9px] font-normal text-[#999]">K/s</span></span></div>
    </div>
    <div class="absolute left-0 top-0 h-[60px] w-[60px] rounded-full bg-[#46525c]/95"></div>
    <svg class="absolute left-0 top-0" width="60" height="60" viewBox="0 0 60 60"><path d="M30 4a26 26 0 0 1 16 5.500" fill="none" stroke="#40d8c8" stroke-width="1.500"/><path d="M46 9.500a26 26 0 0 1 1 40" fill="none" stroke="#8ac080" stroke-width="1.500"/><path d="M47 49.500a26 26 0 0 1-29 3.500" fill="none" stroke="#e8d840" stroke-width="1.500"/></svg>
    <div class="absolute left-[12px] top-[14px] flex items-end text-white"><span class="text-[26px] leading-[30px]">57</span><span class="mb-[2px] ml-[1px] text-[10px] leading-[12px]">%</span></div>
  </div>
</div>
</body>
</html>
